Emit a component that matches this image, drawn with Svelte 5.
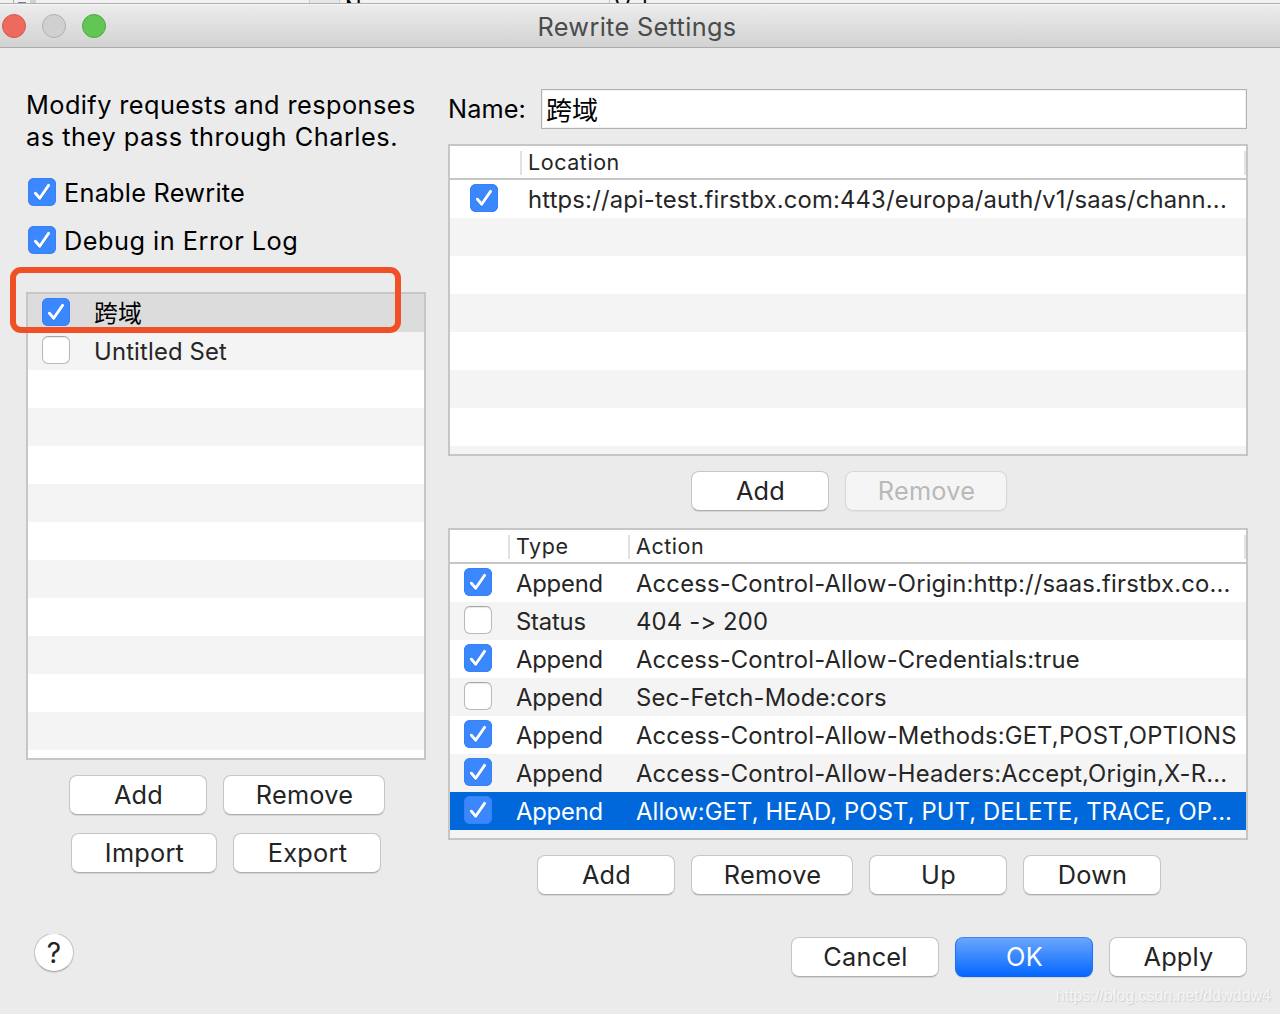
<script>
  const sets = [
    { on: true,  name: '跨域',         selected: true },
    { on: false, name: 'Untitled Set', selected: false },
  ];

  const locations = [
    { on: true, url: 'https://api-test.firstbx.com:443/europa/auth/v1/saas/chann...' },
  ];

  const rules = [
    { on: true,  type: 'Append', action: 'Access-Control-Allow-Origin:http://saas.firstbx.co...' },
    { on: false, type: 'Status', action: '404 -> 200' },
    { on: true,  type: 'Append', action: 'Access-Control-Allow-Credentials:true' },
    { on: false, type: 'Append', action: 'Sec-Fetch-Mode:cors' },
    { on: true,  type: 'Append', action: 'Access-Control-Allow-Methods:GET,POST,OPTIONS' },
    { on: true,  type: 'Append', action: 'Access-Control-Allow-Headers:Accept,Origin,X-R...' },
    { on: true,  type: 'Append', action: 'Allow:GET, HEAD, POST, PUT, DELETE, TRACE, OP...' },
  ];

  let selectedRule = 6;
  let name = '跨域';
</script>

{#snippet check(on)}
  <span class="check" class:on role="checkbox" aria-checked={on}>
    {#if on}
      <svg viewBox="0 0 28 28" width="28" height="28">
        <path class="tick-shadow" d="M7.4 16.2 L11.7 21.3 L20.6 8.4" />
        <path d="M7.4 15.2 L11.7 20.3 L20.6 7.4" />
      </svg>
    {/if}
  </span>
{/snippet}

<div class="screen">
  <div class="behind">
    <span class="b-line"></span>
    <span class="b-icon"></span>
    <span class="b-icon2"></span>
    <span class="b-cell"></span>
    <span class="b-name">Name</span>
    <span class="b-sep"></span>
    <span class="b-value">Value</span>
  </div>

  <header>
    <span class="light red"></span>
    <span class="light gray"></span>
    <span class="light green"></span>
    <h1>Rewrite Settings</h1>
  </header>

  <main>
    <section class="left">
      <p class="intro">Modify requests and responses<br /><span>as they pass through Charles.</span></p>
      <div class="option">{@render check(true)}<span class="o1">Enable Rewrite</span></div>
      <div class="option">{@render check(true)}<span class="o2">Debug in Error Log</span></div>

      <div class="list sets">
        {#each sets as set}
          <div class="row" class:current={set.selected}>
            {@render check(set.on)}
            <span>{set.name}</span>
          </div>
        {/each}
        <div class="mark"></div>
      </div>

      <div class="buttons">
        <button class="w138">Add</button>
        <button class="w162">Remove</button>
      </div>
      <div class="buttons second">
        <button class="w146">Import</button>
        <button class="w148">Export</button>
      </div>
    </section>

    <section class="right">
      <div class="name">
        <span>Name:</span>
        <div class="field">{name}</div>
      </div>

      <div class="list locations">
        <div class="head"><span></span><span>Location</span></div>
        {#each locations as loc}
          <div class="row">
            {@render check(loc.on)}
            <span>{loc.url}</span>
          </div>
        {/each}
      </div>
      <div class="buttons">
        <button class="w138">Add</button>
        <button class="w162" disabled>Remove</button>
      </div>

      <div class="list rules">
        <div class="head"><span></span><span>Type</span><span>Action</span></div>
        {#each rules as rule, i}
          <div class="row" class:active={i === selectedRule}>
            {@render check(rule.on)}
            <span class="type">{rule.type}</span>
            <span>{rule.action}</span>
          </div>
        {/each}
      </div>
      <div class="buttons">
        <button class="w138">Add</button>
        <button class="w162">Remove</button>
        <button class="w138">Up</button>
        <button class="w138">Down</button>
      </div>
    </section>
  </main>

  <footer>
    <div class="help-clip"><button class="help" aria-label="Help">?</button></div>
    <div class="buttons">
      <button class="w148">Cancel</button>
      <button class="w138 primary">OK</button>
      <button class="w138">Apply</button>
    </div>
  </footer>

  <div class="watermark">https://blog.csdn.net/ddwddw4</div>
</div>

<style>
:global(body) { margin: 0; background: #ebebeb; }

.screen {
  position: relative;
  width: 1280px;
  height: 1014px;
  overflow: hidden;
  display: flex;
  flex-direction: column;
  background: #ebebeb;
  color: #000;
  font-family: Inter, "Noto Sans CJK SC", sans-serif;
  font-feature-settings: "calt" 0;
  font-size: 25.3px;
  letter-spacing: 0.4px;
  white-space: nowrap;
}
.screen * { box-sizing: border-box; }

/* ── Window behind ── */
.behind {
  position: relative;
  height: 4px;
  overflow: hidden;
  background: #f1f1f1;
  border-bottom: 1px solid #b0b0b0;
}
.behind span { position: absolute; top: 0; }
.b-line { left: 13px; width: 1px; height: 4px; background: #aaa; }
.behind .b-icon { left: 18px; top: 2px; width: 8px; height: 1px; background: #6f7f90; }
.b-icon2 { left: 30px; width: 6px; height: 3px; background: #cdd2d6; }
.b-cell { left: 309px; width: 31px; height: 4px; background: #e6e6e6; border: solid #ccc; border-width: 0 1px; }
.b-sep { left: 609px; width: 1px; height: 4px; background: #c4c4c4; }
.behind .b-name,
.behind .b-value { top: -4px; font-size: 22px; line-height: 24px; }
.b-name { left: 345px; }
.b-value { left: 615px; }

/* ── Title bar ── */
header {
  position: relative;
  height: 44px;
  display: flex;
  align-items: center;
  gap: 16px;
  padding: 0 0 0 2px;
  background: linear-gradient(#ececec, #d2d2d2);
  border-top: 1px solid #f6f6f6;
  border-bottom: 1px solid #adadad;
}
.light { width: 24px; height: 24px; border-radius: 50%; border: 1px solid; }
.red { background: #ed6a5e; border-color: #d9564b; }
.gray { background: #d0d0d0; border-color: #b1b1b1; }
.green { background: #61c654; border-color: #4fa73f; }
h1 {
  position: absolute;
  left: 0;
  right: 6px;
  top: 0;
  margin: 0;
  text-align: center;
  font-size: 25.3px;
  font-weight: 400;
  line-height: 44px;
  letter-spacing: 0.33px;
  color: #4b4b4b;
}

main {
  display: grid;
  grid-template-columns: 400px 800px;
  column-gap: 22px;
  padding-left: 26px;
  height: 869px;
}

/* ── Checkboxes ── */
.check {
  display: block;
  width: 28px;
  height: 28px;
  flex: none;
  border-radius: 6px;
  background: #fff;
  border: 1px solid #b9b9b9;
  border-top-color: #a6a6a6;
  box-shadow: inset 0 1px 1px #e8e8e8;
}
.check.on {
  border: none;
  background: #3b87fd;
  box-shadow: inset 0 0 0 1px #3880f5;
}
.check svg { display: block; }
.check path {
  fill: none;
  stroke: #fff;
  stroke-width: 2.9;
  stroke-linecap: round;
  stroke-linejoin: round;
}
.check .tick-shadow { stroke: rgba(20, 80, 190, 0.35); }

/* ── Left column ── */
.left { padding-top: 41px; }
.intro { margin: 0 0 25px; line-height: 32px; letter-spacing: 0.43px; }
.intro span { letter-spacing: 0.54px; }
.option {
  display: flex;
  align-items: center;
  gap: 8px;
  height: 28px;
  margin: 0 0 20px 2px;
}
.option span:last-child { line-height: 30px; padding-top: 2px; }
.o1 { letter-spacing: 0.25px; }
.o2 { letter-spacing: 0.5px; }

.list {
  position: relative;
  border: 2px solid #c6c6c6;
  background: repeating-linear-gradient(#fff 0 38px, #f4f4f4 38px 76px);
  font-size: 23.8px;
  letter-spacing: 0.18px;
  color: #262626;
}
.row {
  display: grid;
  height: 38px;
  line-height: 40px;
}
.row .check { margin-top: 4px; }
.type { letter-spacing: -0.2px; }
.sets { height: 468px; margin-top: 38px; }
.sets .row { grid-template-columns: 52px 1fr; padding-left: 14px; }
.current { background: #dcdcdc; color: #000; }

.mark {
  position: absolute;
  left: -18px;
  top: -27px;
  width: 391px;
  height: 66px;
  border: 6px solid #ef5025;
  border-radius: 11px;
}

/* ── Right column ── */
.right { padding-top: 41px; }
.name { display: flex; align-items: center; height: 40px; }
.name > span { width: 93px; line-height: 30px; padding-bottom: 1px; letter-spacing: 0.1px; }
.field {
  width: 706px;
  height: 40px;
  padding-left: 4px;
  background: #fff;
  border: 1px solid #b1b1b1;
  box-shadow: inset 0 0 0 1px #f2f2f2;
  font-size: 26px;
  line-height: 42px;
  letter-spacing: 0;
}

.head {
  display: grid;
  height: 34px;
  background: #fff;
  border-bottom: 2px solid #c6c6c6;
  font-size: 21.5px;
  line-height: 32px;
  letter-spacing: 0.55px;
}
.head span {
  position: relative;
}
.head span::after {
  content: '';
  position: absolute;
  right: 6px;
  top: 5px;
  width: 2px;
  height: 24px;
  background: #e2e2e2;
}
.head span:last-child::after { right: 0; }

.locations {
  height: 312px;
  margin-top: 15px;
  background: repeating-linear-gradient(#fff 0 38px, #f4f4f4 38px 76px) 0 34px;
}
.locations .head { grid-template-columns: 78px 1fr; }
.locations .row { grid-template-columns: 58px 1fr; padding-left: 20px; }

.rules {
  height: 312px;
  margin-top: 17px;
  background: repeating-linear-gradient(#fff 0 38px, #f4f4f4 38px 76px) 0 34px;
}
.rules .head { grid-template-columns: 66px 120px 1fr; }
.rules .row { grid-template-columns: 52px 120px 1fr; padding-left: 14px; }
.row.active { background: #0068da; color: #fff; letter-spacing: 0.1px; }

/* ── Buttons ── */
.buttons { display: flex; gap: 16px; }
button {
  height: 40px;
  padding: 0 0 0 1px;
  border: 1px solid #c6c6c6;
  border-bottom-color: #adadad;
  border-radius: 8px;
  background: #fff;
  box-shadow: 0 1px 1px rgba(0, 0, 0, 0.1);
  font: inherit;
  font-feature-settings: inherit;
  line-height: 38px;
  letter-spacing: 0.25px;
  color: #242424;
}
button:disabled {
  background: #f5f5f5;
  border-color: #d6d6d6;
  color: #b9b9b9;
  box-shadow: 0 1px 1px rgba(0, 0, 0, 0.04);
}
.primary {
  border-color: #3f86f7 #1f70f8 #0562fb;
  background: linear-gradient(#6ba6fc, #0467ff);
  color: #fff;
}
.w138 { width: 138px; }
.w146 { width: 146px; }
.w148 { width: 148px; }
.w162 { width: 162px; }

.left .buttons { padding-left: 43px; margin-top: 15px; }
.left .second { padding-left: 45px; margin-top: 18px; }
.right .buttons { justify-content: center; margin-top: 15px; padding-left: 2px; }

/* ── Footer ── */
footer {
  display: flex;
  justify-content: space-between;
  align-items: flex-start;
  padding: 17px 33px 0 33px;
}
footer .buttons { padding-top: 3px; }
.help-clip { height: 42px; padding: 0 1px; overflow: hidden; }
.help {
  display: block;
  width: 40px;
  height: 39px;
  margin-top: -1px;
  padding: 0;
  border-radius: 50%;
  font-size: 28px;
  line-height: 38px;
  letter-spacing: 0;
}

.watermark {
  position: absolute;
  right: 9px;
  top: 987px;
  font-family: "Liberation Sans", sans-serif;
  font-size: 16px;
  line-height: 18px;
  letter-spacing: 0;
  color: #f5f5f5;
  text-shadow: 1px 1px 1px #cfcfcf;
}
</style>
